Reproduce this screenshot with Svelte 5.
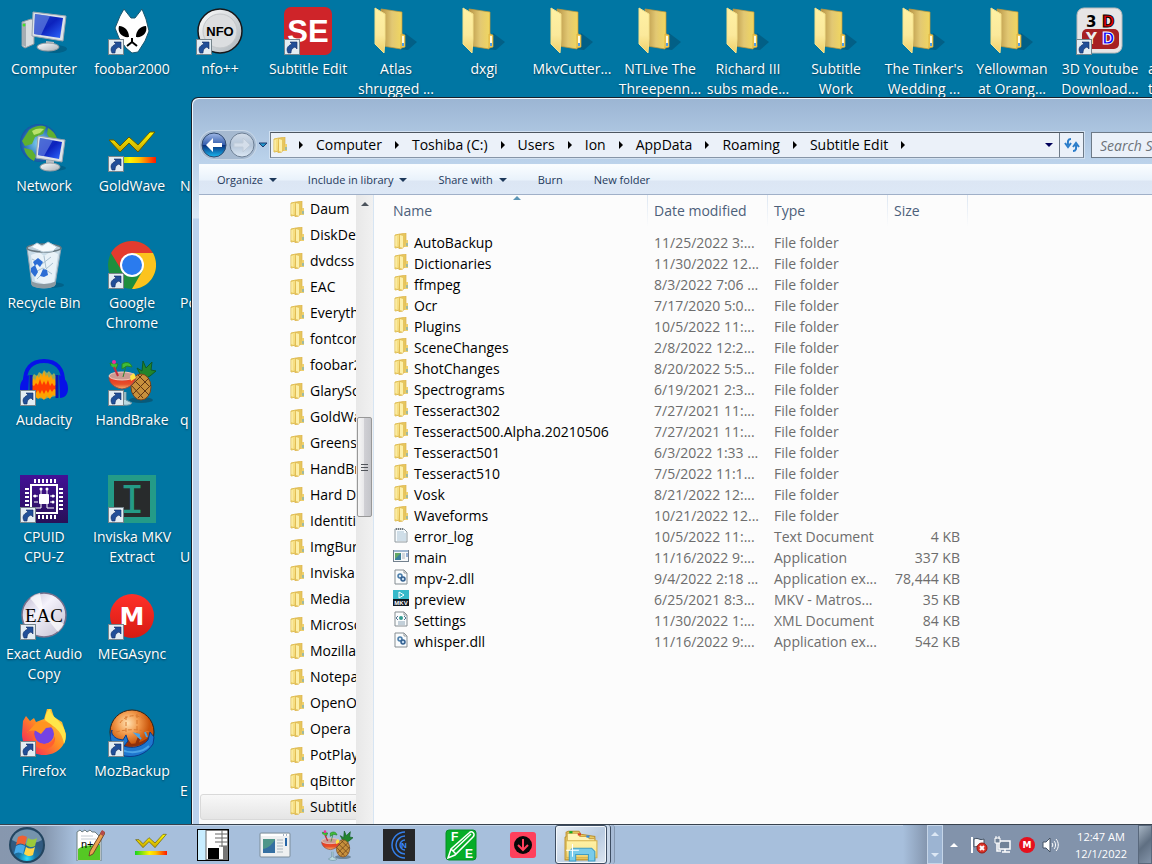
<script lang="ts">
    type Shortcut = { icon: string, label: string[], link?: boolean, cut?: boolean, col: number, row: number };

    const shortcuts: Shortcut[] = [
        { icon: "computer", label: ["Computer"], col: 1, row: 1 },
        { icon: "network", label: ["Network"], col: 1, row: 2 },
        { icon: "bin", label: ["Recycle Bin"], col: 1, row: 3 },
        { icon: "audacity", label: ["Audacity"], link: true, col: 1, row: 4 },
        { icon: "cpuz", label: ["CPUID", "CPU-Z"], link: true, col: 1, row: 5 },
        { icon: "eac", label: ["Exact Audio", "Copy"], link: true, col: 1, row: 6 },
        { icon: "firefox", label: ["Firefox"], link: true, col: 1, row: 7 },
        { icon: "foobar", label: ["foobar2000"], link: true, col: 2, row: 1 },
        { icon: "goldwave", label: ["GoldWave"], link: true, col: 2, row: 2 },
        { icon: "chrome", label: ["Google", "Chrome"], link: true, col: 2, row: 3 },
        { icon: "handbrake", label: ["HandBrake"], link: true, col: 2, row: 4 },
        { icon: "inviska", label: ["Inviska MKV", "Extract"], link: true, col: 2, row: 5 },
        { icon: "mega", label: ["MEGAsync"], link: true, col: 2, row: 6 },
        { icon: "mozbackup", label: ["MozBackup"], link: true, col: 2, row: 7 },
        { icon: "nfo", label: ["nfo++"], link: true, col: 3, row: 1 },
        { icon: "", label: ["N"], cut: true, col: 3, row: 2 },
        { icon: "", label: ["Po"], cut: true, col: 3, row: 3 },
        { icon: "", label: ["q"], cut: true, col: 3, row: 4 },
        { icon: "", label: ["", "U"], cut: true, col: 3, row: 5 },
        { icon: "", label: ["", "E"], cut: true, col: 3, row: 7 },
        { icon: "subtitle", label: ["Subtitle Edit"], link: true, col: 4, row: 1 },
        { icon: "folder", label: ["Atlas", "shrugged ..."], col: 5, row: 1 },
        { icon: "folder", label: ["dxgi"], col: 6, row: 1 },
        { icon: "folder", label: ["MkvCutter..."], col: 7, row: 1 },
        { icon: "folder", label: ["NTLive The", "Threepenn..."], col: 8, row: 1 },
        { icon: "folder", label: ["Richard III", "subs made..."], col: 9, row: 1 },
        { icon: "folder", label: ["Subtitle", "Work"], col: 10, row: 1 },
        { icon: "folder", label: ["The Tinker's", "Wedding ..."], col: 11, row: 1 },
        { icon: "folder", label: ["Yellowman", "at Orang..."], col: 12, row: 1 },
        { icon: "youtube", label: ["3D Youtube", "Download..."], link: true, col: 13, row: 1 },
        { icon: "", label: ["a", "t"], cut: true, col: 14, row: 1 },
    ];

    const path = ["Computer", "Toshiba (C:)", "Users", "Ion", "AppData", "Roaming", "Subtitle Edit"];

    const tree = [
        "Daum", "DiskDefrag", "dvdcss", "EAC", "Everything", "fontconfig", "foobar2000", "GlarySoft",
        "GoldWave", "Greenshot", "HandBrake", "Hard Disk", "Identities", "ImgBurn", "Inviska", "Media",
        "Microsoft", "Mozilla", "Notepad++", "OpenOffice", "Opera", "PotPlayer", "qBittorrent", "Subtitle Edit",
    ];

    const files = [
        ["folder", "AutoBackup", "11/25/2022 3:...", "File folder", ""],
        ["folder", "Dictionaries", "11/30/2022 12...", "File folder", ""],
        ["folder", "ffmpeg", "8/3/2022 7:06 ...", "File folder", ""],
        ["folder", "Ocr", "7/17/2020 5:0...", "File folder", ""],
        ["folder", "Plugins", "10/5/2022 11:...", "File folder", ""],
        ["folder", "SceneChanges", "2/8/2022 12:2...", "File folder", ""],
        ["folder", "ShotChanges", "8/20/2022 5:5...", "File folder", ""],
        ["folder", "Spectrograms", "6/19/2021 2:3...", "File folder", ""],
        ["folder", "Tesseract302", "7/27/2021 11:...", "File folder", ""],
        ["folder", "Tesseract500.Alpha.20210506", "7/27/2021 11:...", "File folder", ""],
        ["folder", "Tesseract501", "6/3/2022 1:33 ...", "File folder", ""],
        ["folder", "Tesseract510", "7/5/2022 11:1...", "File folder", ""],
        ["folder", "Vosk", "8/21/2022 12:...", "File folder", ""],
        ["folder", "Waveforms", "10/21/2022 12...", "File folder", ""],
        ["text", "error_log", "10/5/2022 11:...", "Text Document", "4 KB"],
        ["app", "main", "11/16/2022 9:...", "Application", "337 KB"],
        ["dll", "mpv-2.dll", "9/4/2022 2:18 ...", "Application ex...", "78,444 KB"],
        ["mkv", "preview", "6/25/2021 8:3...", "MKV - Matros...", "35 KB"],
        ["xml", "Settings", "11/30/2022 1:...", "XML Document", "84 KB"],
        ["dll", "whisper.dll", "11/16/2022 9:...", "Application ex...", "542 KB"],
    ];

    const pinned = [
        ["notepad", "Notepad++"],
        ["goldwave", "GoldWave"],
        ["piano", "Piano"],
        ["appwin", "Application"],
        ["handbrake", "HandBrake"],
        ["sonar", "N"],
        ["filmedit", "FE"],
        ["download", "Download"],
    ];

    let selected = $state("Subtitle Edit");
</script>

{#snippet art(name: string, size: number)}
    <svg class="art" width={size} height={size} viewBox={["notepad", "piano", "appwin", "sonar", "filmedit", "download", "explorer"].includes(name) ? "0 0 32 32" : "0 0 48 48"} aria-hidden="true">
        {#if name === "computer"}
            <ellipse cx="35" cy="42" rx="12" ry="4" fill="#024e70" opacity=".5" />
            <path d="M2 15l9-3 3 1v24l-9 4-3-2z" fill="#d9dde0" stroke="#8f989e" />
            <path d="M2 15l4 1v24l-4-2z" fill="#a6adb3" />
            <circle cx="4" cy="18" r="1.500" fill="#43e02c" />
            <path d="M26 34l8 1v6h-8z" fill="#b9bfc5" />
            <ellipse cx="28" cy="40" rx="11" ry="4" fill="url(#silver)" stroke="#969da3" />
            <path d="M13 5l33 4-3 25-31-5z" fill="#dde3e8" stroke="#9aa5b0" />
            <path d="M15 7l28 4-3 20-26-4z" fill="url(#screen)" />
            <path d="M15 7l15 2-9 19-7-1z" fill="#7895e8" opacity=".55" />
        {:else if name === "network"}
            <circle cx="19" cy="19" r="19" fill="url(#globe)" />
            <path d="M9 6c7-5 13-5 17-3l-3 7-8 3-3 7-7 2-3-5zM28 4c7 4 9 9 10 14l-8-3-3-5zM4 24l8 2 4 6-2 5c-6-3-9-8-10-13z" fill="#5fb02f" />
            <path d="M12 7c4-3 9-3 12-2l-4 4-6 2z" fill="#b9e26b" />
            <ellipse cx="34" cy="44" rx="12" ry="3" fill="#024e70" opacity=".5" />
            <path d="M26 34l8 1v8h-8z" fill="#b9bfc5" />
            <ellipse cx="30" cy="43" rx="10" ry="4" fill="url(#silver)" stroke="#969da3" />
            <path d="M18 12l27 4-3 22-26-4z" fill="#dde3e8" stroke="#9aa5b0" />
            <path d="M20 14l22 4-3 17-21-4z" fill="url(#screen)" />
            <path d="M20 14l13 2-9 16-6-1z" fill="#7895e8" opacity=".55" />
        {:else if name === "bin"}
            <ellipse cx="30" cy="44" rx="14" ry="3" fill="#024e70" opacity=".5" />
            <path d="M7 7l5 37c6 4 18 4 23 0l6-37z" fill="#c9dce8" stroke="#8fa3b0" />
            <path d="M11 14l8-3 5 4 8-5 6 3-4 28-10 2-9-3z" fill="#e9f2f8" />
            <path d="M12 18l10 5 9-7M15 31l8-4 9 6M17 38l6-6M33 22l-7 6M24 15l2 12" stroke="#a9c0d0" fill="none" />
            <ellipse cx="24" cy="7" rx="17" ry="4" fill="#b8ccd8" stroke="#68777f" stroke-width="1.500" />
            <path d="M11 6l6-4 5 3 6-4 9 5-4 4-10 1z" fill="#f7fbfd" stroke="#bed0dc" />
            <path d="M13 21l5-4 5 4-3 5-3-3-2 2zM11 27l4-3 3 7-3 5-4-5zM20 35l3-7 4 1 1 5-4 2z" fill="#2c6dd5" />
            <path d="M11 40c7 4 19 4 25 0l-1 5c-6 3-17 3-23 0z" fill="#8c9aa2" />
        {:else if name === "audacity"}
            <path d="M11 38V21l3-5 3 2 2-4 3 2 2-4 3 3 2-2 3 4 2-2 3 5v18l-6 1-6 2-8-1z" fill="#b9b84c" opacity=".8" />
            <path d="M12 37V23l2-3 1 3 2-6 2 3 2-5 1 4 2-6 2 6 1-3 2 4 2-3 2 5 1-2 2 4v14l-3-1-3 4-3-3-3 4-3-3-3 2-2-2z" fill="#ffa200" />
            <path d="M12 27l2 1 2-3 2 2 2-6 2 6 2-4 2 4 2-5 2 6 2-3 2 3 3-2v6l-3-1-2 3-2-3-2 4-2-3-2 4-2-4-2 4-2-4-2 3-2-3-2 1z" fill="#ff3c00" />
            <path d="M5 26C4 10 12 3 24 3s20 7 19 23" fill="none" stroke="#0712e8" stroke-width="4" />
            <path d="M9 17C2 20 0 25 0 31c0 5 3 9 8 9zM39 17c7 3 9 8 9 14 0 5-3 9-8 9z" fill="#0712e8" />
            <path d="M11 17v23M37 17v23" stroke="#0a18b4" stroke-width="3" />
        {:else if name === "cpuz"}
            <rect width="48" height="48" fill="url(#violet)" />
            <path d="M14 6h22M14 42h22" stroke="#fff" stroke-width="4" stroke-dasharray="2 2" />
            <path d="M7 13v24M41 13v24" stroke="#fff" stroke-width="4" stroke-dasharray="2 2" />
            <rect x="11" y="10" width="26" height="28" fill="none" stroke="#fff" stroke-width="2" />
            <rect x="19" y="19" width="10" height="10" rx="1" fill="#fff" />
            <path d="M21 20v-6M27 20v-6M18 21h-5M18 27h-4M30 21h5M30 27h4M21 29v4h-6M27 29v4h7" stroke="#fff" fill="none" />
            <g fill="#fff"><circle cx="21" cy="14" r="1.500" /><circle cx="27" cy="14" r="1.500" /><circle cx="15" cy="21" r="1.500" /><circle cx="33" cy="21" r="1.500" /><circle cx="33" cy="27" r="1.500" /></g>
        {:else if name === "eac"}
            <circle cx="24" cy="23" r="22" fill="url(#disc)" stroke="#77708c" stroke-width="1.500" />
            <path d="M24 23L10 6a22 22 0 0110-5zM24 23l14 17a22 22 0 006-8z" fill="#fff" opacity=".7" />
            <text x="24" y="30" text-anchor="middle" class="serif" font-size="19">EAC</text>
        {:else if name === "firefox"}
            <path d="M3 12l3-5 4 5 4-3 2 4 8-3 3-10 4-1 3 9 8 5 4 12c0 12-9 21-22 21C11 46 2 37 2 25z" fill="url(#flame)" />
            <path d="M25 11c0-6 3-10 5-11 0 6 7 9 11 15 5 6 6 14 3 20-1-8-5-14-11-18z" fill="#ffe64a" />
            <circle cx="24" cy="25" r="10" fill="#7543e3" />
            <path d="M15 15c7-4 15-2 18 3l-7 1-5 6-5-3c-3-1-9 0-9 2z" fill="#ff9420" />
            <path d="M14 22c0 9 5 13 11 13 5 0 9-4 10-8 1 8-4 14-13 13-7-1-11-8-8-18z" fill="#ff602e" />
        {:else if name === "foobar"}
            <path d="M16 2l7 9h4l7-9 4 10 3 12-4 10-7 11-6 1-6-5-7-10-4-10 5-12z" fill="#fff" stroke="#1b5870" />
            <path d="M11 19c6 0 10 5 10 11-6 1-12-4-10-11zM38 19c-6 0-10 5-10 11 6 1 12-4 10-11z" fill="#000" />
            <path d="M19 39l5-4 5 4M24 35v-4" fill="none" stroke="#000" stroke-width="2" />
        {:else if name === "goldwave"}
            <path d="M1 16h5l6 6 9-9 9 8L42 8h5L30 28l-9-9-9 9z" fill="url(#gold)" stroke="#665b00" />
            <rect y="33" width="48" height="6" fill="url(#spectrum)" />
        {:else if name === "chrome"}
            <circle cx="24" cy="24" r="24" fill="#1e8e3e" />
            <path d="M3 12C12-4 36-4 45 12H24L14 30z" fill="#e33b2e" />
            <path d="M45 12c9 17-3 36-21 36l11-19-11-17z" fill="#fcc31e" />
            <circle cx="24" cy="24" r="12" fill="#fff" />
            <circle cx="24" cy="24" r="10" fill="#2a7bee" />
        {:else if name === "handbrake"}
            <ellipse cx="33" cy="42" rx="12" ry="3" fill="#14333d" opacity=".4" />
            <path d="M33 18l-4-8 5 3 1-10 3 7 6-6-1 8 5 1-6 5-4 2z" fill="#21852d" stroke="#105a26" />
            <ellipse cx="33" cy="29" rx="10" ry="13" fill="#c7903c" stroke="#79451b" />
            <path d="M25 21l16 16M23 27l12 13M30 17l12 12M41 20L25 36M43 27L30 40M34 17L23 28" stroke="#5d3514" />
            <path d="M16 34v8l-5 3c3 3 11 3 13 0l-6-3v-8" fill="#bad9e0" stroke="#6f94a2" />
            <path d="M1 19c0 6 5 11 13 12 8-1 13-6 14-12-7 4-20 4-27 0z" fill="url(#drink)" stroke="#87504b" />
            <ellipse cx="14" cy="18" rx="13" ry="4" fill="#ca9b92" stroke="#fdc9b8" />
            <path d="M3 8l-1-3 8 1-2 5M14 6c5-3 9-1 10 3l-5-1-5 3zM18 8l-3 11" fill="#41be36" stroke="#24832b" />
            <circle cx="6" cy="4" r="2" fill="#f02ca0" /><path d="M6 9l4 9" stroke="#c22d3c" stroke-width="2" />
            <path d="M22 18l4-3 2 5-5 3z" fill="#ffe344" />
        {:else if name === "inviska"}
            <rect width="48" height="48" fill="#249b87" />
            <rect x="6" y="6" width="36" height="36" fill="#282b2c" />
            <text x="24" y="38" text-anchor="middle" class="mono" font-size="42" fill="#249b87">I</text>
        {:else if name === "mega"}
            <circle cx="24" cy="24" r="22" fill="url(#red)" />
            <text x="24" y="33" text-anchor="middle" class="wide" font-size="25" fill="#fff">M</text>
        {:else if name === "mozbackup"}
            <circle cx="24" cy="23" r="22" fill="url(#orange)" stroke="#342314" />
            <path d="M12 14c5-8 17-10 25-3M8 23c11-3 22-3 33 0M18 7v19M29 5v21" fill="none" stroke="#d8792f" stroke-dasharray="4 2" />
            <path d="M9 33c9 5 23 5 34-5M18 30l5 7M31 29l-3 8" stroke="#8f310d" fill="none" stroke-width="3" />
            <path d="M4 21c-4 8 0 18 9 25 12 4 25 0 32-11l1-7-4-5-2 8c-6 7-16 9-24 6l4-5-2-6-3 5-5-1c-5-2-7-6-6-9z" fill="#1e77cf" stroke="#0a3c8c" />
            <path d="M12 40c9 5 22 4 29-3M39 28l-2-5M33 30l-5-5 4 1" fill="none" stroke="#4aa3e6" stroke-width="2" />
        {:else if name === "nfo"}
            <circle cx="24" cy="24" r="22" fill="url(#silver)" stroke="#171719" stroke-width="1.500" />
            <circle cx="24" cy="24" r="17" fill="#dcdee0" stroke="#c4c7ca" />
            <text x="24" y="29" text-anchor="middle" class="sans heavy" font-size="13">NFO</text>
        {:else if name === "subtitle"}
            <rect x="0" y="0" width="48" height="48" rx="7" fill="#cf2429" />
            <text x="24" y="35" text-anchor="middle" class="sans heavy" font-size="31" fill="#fff">SE</text>
        {:else if name === "folder"}
            <path d="M25 42l8-16 12 9-9 8z" fill="#063f5b" opacity=".4" />
            <path d="M9 2l21 3v21l1 4-2 12-18-3z" fill="url(#pane)" stroke="#c59a38" stroke-width=".7" />
            <path d="M3 1l10 6v25l-1 14-9-9z" fill="url(#flap)" stroke="#f4e28c" />
            <path d="M29 27l4 1v12l-4 1z" fill="#f0cb56" stroke="#d8a93a" stroke-width=".7" />
            <path d="M31 29v8" stroke="#fffbe0" stroke-width="2" /><path d="M31 36v3" stroke="#4f9ee9" stroke-width="2" />
        {:else if name === "youtube"}
            <rect x="1" y="1" width="45" height="45" rx="7" fill="#e7e5e5" stroke="#bababa" />
            <rect x="6" y="22" width="37" height="20" rx="5" fill="#a72022" />
            <text x="10" y="20" class="wide" font-size="15">3</text><text x="26" y="20" class="wide" font-size="15" fill="#e60000" stroke="#000">D</text>
            <text x="10" y="37" class="wide" font-size="15" fill="#eee">Y</text><text x="26" y="37" class="wide" font-size="15" fill="#0001ff" stroke="#fff">D</text>
        {:else if name === "notepad"}
            <path d="M4 3l3-2 2 2 3-2 2 2 3-2 2 2h3l6 6v23H4z" fill="#fff" stroke="#6f8082" />
            <path d="M5 20c6-5 14-3 22-4v15H5z" fill="#55c824" />
            <path d="M8 7h12M8 10h15" stroke="#c4ccd2" />
            <text x="8" y="19" class="sans" font-size="11">n++</text>
            <path d="M29 2l3 2-12 21-4 2 1-5z" fill="#eba34f" stroke="#6f4927" /><path d="M29 1l3 2-2 4-3-2z" fill="#b54a4a" />
        {:else if name === "piano"}
            <rect x="1" y="1" width="30" height="30" fill="#fff" stroke="#000" />
            <path d="M1 1h8v30H1z" fill="#c8edff" /><path d="M9 1v30M18 5h13M18 9h13M18 13h13M22 17h9M25 1v17" stroke="#666" />
            <rect x="26" y="17" width="5" height="14" fill="#777" /><rect x="11" y="19" width="11" height="11" fill="#000" />
            <rect x=".5" y=".5" width="31" height="31" fill="none" stroke="#000" />
        {:else if name === "appwin"}
            <rect x="1" y="4" width="30" height="24" rx="1" fill="#eef0f1" stroke="#7d8e9c" />
            <path d="M2 6h28" stroke="#fff" stroke-width="2" /><rect x="4" y="10" width="12" height="14" fill="#4f9689" /><path d="M4 20c6-1 9-5 12-9v13H4z" fill="#356fa2" />
            <path d="M18 11h6M18 14h6M18 17h6M18 20h6M18 23h6" stroke="#aab6bd" /><path d="M27 9v8" stroke="#2766a8" stroke-width="2" />
            <path d="M24 6h1M27 6h1" stroke="#4b6385" />
        {:else if name === "sonar"}
            <rect width="32" height="32" fill="#252628" />
            <path d="M22 3a13 13 0 000 26M22 7a9 9 0 000 18M22 11a5 5 0 000 10" fill="none" stroke="#357fe8" stroke-width="1.500" />
            <text x="18" y="19" class="sans heavy" font-size="8" fill="#3d8dff">N</text>
        {:else if name === "filmedit"}
            <rect x="1" y="1" width="30" height="30" rx="3" fill="#06ad27" stroke="#078d27" />
            <text x="6" y="12" class="sans heavy" font-size="12" fill="#fff">F</text><text x="20" y="29" class="sans heavy" font-size="12" fill="#fff">E</text>
            <path d="M3 29l3-9L24 4c3-3 7 1 4 4L10 26zM8 22L26 5M6 20l5 5" fill="none" stroke="#fff" stroke-width="1.500" />
        {:else if name === "download"}
            <rect x="3" y="3" width="26" height="26" rx="3" fill="#ff405c" />
            <circle cx="16" cy="16" r="9" fill="#080808" /><path d="M16 10v11M11 16l5 5 5-5" fill="none" stroke="#ff405c" stroke-width="2" />
        {:else if name === "explorer"}
            <path d="M2 8V4l2-1h10l2 3 13 2v22H1V9z" fill="#e8cb65" stroke="#bd912f" />
            <path d="M3 9V5h10l2 3h7l2 2h5v4H3z" fill="#fff4b8" stroke="#cda547" />
            <path d="M5 4h3" stroke="#11aa22" stroke-width="2" /><path d="M13 6h3" stroke="#dd3d2a" stroke-width="2" /><path d="M21 8h3" stroke="#2b8bea" stroke-width="2" />
            <path d="M2 12h29v16H2z" fill="url(#flap)" stroke="#d5b04b" />
            <path d="M5 31V22l3-3h18l3 3v9h-6v-6H11v6z" fill="#79cbea" stroke="#3f9dc5" />
            <path d="M8 15v12M2 21h12" stroke="#fff" />
        {/if}
    </svg>
{/snippet}

{#snippet small(name: string)}
    <svg class="small" width="16" height="16" viewBox="0 0 16 16" aria-hidden="true">
        {#if name === "folder"}
            <path d="M2 2l5-1v13l-5 1z" fill="#f6df83" stroke="#dfbe55" />
            <path d="M7 1l6-1v13l-3 1v1l-4 1z" fill="#e6c65e" stroke="#dcb34b" stroke-width=".7" />
            <path d="M7 2l3 1v12l-3-1z" fill="#fcefa9" /><path d="M3 3v10" stroke="#fff6bd" />
            <path d="M13 7h2v7h-3z" fill="#eed06d" /><path d="M14 10v3" stroke="#54a5d2" />
        {:else if name === "text"}
            <path d="M2 2h9l3 3v10H2z" fill="#f7fbfd" stroke="#8f999f" /><path d="M3 2h8" stroke="#70787d" stroke-dasharray="1 1" stroke-width="2" />
            <path d="M4 5h7M4 7h9M4 9h9M4 11h9M4 13h9" stroke="#a8c1d3" />
        {:else if name === "app"}
            <rect x=".5" y="2.500" width="15" height="11" fill="#f6f8f9" stroke="#72808d" /><path d="M1 3h14" stroke="#9db6d0" stroke-width="2" />
            <rect x="2" y="5" width="6" height="7" fill="#3a809d" /><path d="M2 5h6l-6 6z" fill="#61a765" /><path d="M9 6h3M9 8h3M9 10h3" stroke="#abb5bc" /><path d="M14 5v4" stroke="#3067b1" />
        {:else if name === "mkv"}
            <rect width="16" height="10" fill="#36b9ca" /><rect y="9" width="16" height="7" fill="#101922" />
            <path d="M6 2l5 3-5 3z" fill="none" stroke="#fff" /><text x="8" y="15" text-anchor="middle" class="sans heavy" font-size="6" fill="#fff">MKV</text>
        {:else}
            <path d="M2 1h9l3 3v11H2z" fill="#fafcfd" stroke="#858d92" /><path d="M11 1v3h3" fill="none" stroke="#92999d" />
            {#if name === "dll"}
                <circle cx="7" cy="7" r="2" fill="#dbe9f5" stroke="#477ba9" stroke-width="1.500" /><circle cx="10" cy="10" r="2" fill="#bed8ee" stroke="#315f90" stroke-width="1.500" />
            {:else}
                <path d="M5 5L3 7l2 2M11 5l2 2-2 2" fill="none" stroke="#527391" /><circle cx="8" cy="7" r="2" fill="#329b91" /><path d="M5 11h7M5 13h7" stroke="#8aa2b4" />
            {/if}
        {/if}
    </svg>
{/snippet}

<svg class="defs" width="0" height="0" aria-hidden="true">
    <defs>
        <linearGradient id="silver" x2="1" y2="1"><stop stop-color="#fff" /><stop offset="1" stop-color="#a9b1b7" /></linearGradient>
        <linearGradient id="screen" x2="1" y2="1"><stop stop-color="#1942c4" /><stop offset=".5" stop-color="#0c22bd" /><stop offset="1" stop-color="#2f69ff" /></linearGradient>
        <radialGradient id="globe"><stop stop-color="#82d5f5" /><stop offset="1" stop-color="#1554a3" /></radialGradient>
        <linearGradient id="violet" x2="0" y2="1"><stop stop-color="#431196" /><stop offset="1" stop-color="#281057" /></linearGradient>
        <linearGradient id="disc" x2="1" y2="1"><stop stop-color="#b9b4cc" /><stop offset=".4" stop-color="#f4f2fb" /><stop offset="1" stop-color="#c1bed0" /></linearGradient>
        <linearGradient id="flame" x1="1" x2="0" y2="1"><stop stop-color="#ffe13f" /><stop offset=".5" stop-color="#ff8a24" /><stop offset="1" stop-color="#f10b68" /></linearGradient>
        <linearGradient id="gold" x2="0" y2="1"><stop stop-color="#fff900" /><stop offset="1" stop-color="#caa600" /></linearGradient>
        <linearGradient id="spectrum"><stop stop-color="#12d420" /><stop offset=".45" stop-color="#fff500" /><stop offset=".65" stop-color="#ffc300" /><stop offset="1" stop-color="#ff1700" /></linearGradient>
        <linearGradient id="drink" x2="0" y2="1"><stop stop-color="#eb3022" /><stop offset=".6" stop-color="#e65029" /><stop offset="1" stop-color="#f6b46e" /></linearGradient>
        <linearGradient id="red" x2="0" y2="1"><stop stop-color="#ff3029" /><stop offset="1" stop-color="#d61b12" /></linearGradient>
        <radialGradient id="orange" cx=".4" cy=".3"><stop stop-color="#ffe2b3" /><stop offset=".5" stop-color="#f29a4c" /><stop offset="1" stop-color="#c9540a" /></radialGradient>
        <linearGradient id="pane"><stop stop-color="#b69345" /><stop offset=".5" stop-color="#e2c873" /><stop offset="1" stop-color="#f2d85e" /></linearGradient>
        <linearGradient id="flap" x2="0" y2="1"><stop stop-color="#fff1a4" /><stop offset=".6" stop-color="#fbe99b" /><stop offset="1" stop-color="#eecf6a" /></linearGradient>
        <linearGradient id="blue" x2="0" y2="1"><stop stop-color="#a1b9e7" /><stop offset=".48" stop-color="#365fae" /><stop offset=".5" stop-color="#082d7c" /><stop offset="1" stop-color="#19b8ef" /></linearGradient>
        <linearGradient id="glass" x2="0" y2="1"><stop stop-color="#d4deea" /><stop offset=".5" stop-color="#b3c4d8" /><stop offset="1" stop-color="#dce8f4" /></linearGradient>
        <radialGradient id="orb" cy=".9"><stop stop-color="#2ce0ff" /><stop offset=".5" stop-color="#1777a9" /><stop offset="1" stop-color="#315a80" /></radialGradient>
    </defs>
</svg>

<div class="screen">
    <main class="desktop">
        <div class="shortcuts">
            {#each shortcuts as s}
                <button class="shortcut" class:cut={s.cut} style="grid-column: {s.col}; grid-row: {s.row}">
                    <span class="picture">
                        {@render art(s.icon, 48)}
                        {#if s.link}
                            <svg class="arrow" width="16" height="16" viewBox="0 0 16 16" aria-hidden="true">
                                <rect x=".5" y=".5" width="15" height="15" fill="#e4edf3" stroke="#77858c" />
                                <path d="M4 14c-2-4-1-7 4-9L6 3h7v7l-2-2c-3 1-4 3-4 6z" fill="#214f98" stroke="#102c64" stroke-width=".6" />
                            </svg>
                        {/if}
                    </span>
                    {#each s.label as line}
                        <span class="line">{line}</span>
                    {/each}
                </button>
            {/each}
        </div>

        <section class="window" aria-label="Subtitle Edit">
            <header class="top">
                <div class="travel">
                    <button aria-label="Back">
                        <svg width="28" height="28" viewBox="0 0 28 28"><circle cx="14" cy="14" r="12" fill="url(#blue)" stroke="#314b70" /><path d="M13 7l-7 7 7 7v-5h9v-4h-9z" fill="#fff" /></svg>
                    </button>
                    <button aria-label="Forward">
                        <svg width="28" height="28" viewBox="0 0 28 28"><circle cx="14" cy="14" r="12" fill="url(#glass)" stroke="#6e8095" /><path d="M15 7l7 7-7 7v-5H6v-4h9z" fill="#d4deea" stroke="#c0ccd9" /></svg>
                    </button>
                </div>
                <button class="recent" aria-label="Recent pages">
                    <svg width="10" height="6" viewBox="0 0 10 6"><path d="M1 1h8L5 5z" fill="#2096cb" stroke="#203d70" /></svg>
                </button>
                <nav class="address" aria-label="Address">
                    {@render small("folder")}
                    <div class="crumbs">
                        {#each path as part}
                            <span class="sep"></span>
                            <a href="#top">{part}</a>
                        {/each}
                        <span class="sep"></span>
                    </div>
                    <button class="history" aria-label="Previous locations"><span class="caret"></span></button>
                    <button class="refresh" aria-label="Refresh">
                        <svg width="16" height="14" viewBox="0 0 16 14"><path d="M7 1C3 1 4 5 4 7M1 5l3 4 3-4M9 13c4 0 3-4 3-6M9 9l3-4 3 4" fill="none" stroke="#2b7dca" stroke-width="2" /></svg>
                    </button>
                </nav>
                <input class="search" type="search" placeholder="Search Subtitle Edit" aria-label="Search Subtitle Edit" />
            </header>

            <div class="body">
                <div class="toolbar">
                    <button>Organize <span class="caret"></span></button>
                    <button>Include in library <span class="caret"></span></button>
                    <button>Share with <span class="caret"></span></button>
                    <button>Burn</button>
                    <button>New folder</button>
                </div>

                <div class="panes">
                    <nav class="tree" aria-label="Folders">
                        {#each tree as name}
                            <button class:selected={selected === name} onclick={() => selected = name}>
                                {@render small("folder")}
                                <span>{name}</span>
                            </button>
                        {/each}
                    </nav>
                    <div class="scrollbar">
                        <span class="up"></span>
                        <span class="thumb"><i></i><i></i><i></i></span>
                    </div>
                    <div class="list">
                        <table>
                            <thead>
                                <tr>
                                    <th class="name">Name<span class="sorted"></span></th>
                                    <th class="date">Date modified</th>
                                    <th class="type">Type</th>
                                    <th class="size">Size</th>
                                </tr>
                            </thead>
                            <tbody>
                                {#each files as [icon, name, date, type, size]}
                                    <tr>
                                        <td><span class="file">{@render small(icon)}{name}</span></td>
                                        <td>{date}</td>
                                        <td>{type}</td>
                                        <td>{size}</td>
                                    </tr>
                                {/each}
                            </tbody>
                        </table>
                    </div>
                </div>
            </div>
        </section>
    </main>

    <footer class="taskbar">
        <button class="start" aria-label="Start">
            <svg width="38" height="38" viewBox="0 0 38 38">
                <circle cx="19" cy="19" r="17" fill="url(#orb)" stroke="#234560" stroke-width="2" />
                <path d="M4 14C8 0 30 0 34 14c-9 5-21 5-30 0z" fill="#b9cdda" opacity=".5" />
                <path d="M10 11c3-2 6-2 9 0l-2 8c-3-2-6-2-9 0z" fill="#ee6133" />
                <path d="M20 12c3 2 6 2 9 0l-2 8c-3 2-6 1-9-1z" fill="#9bca3b" />
                <path d="M8 20c3-2 6-2 9 0l-2 8c-3-2-6-2-9 0z" fill="#47aaea" />
                <path d="M18 21c3 2 6 2 9 0l-2 8c-3 2-6 1-9-1z" fill="#ffd548" />
            </svg>
        </button>
        {#each pinned as [icon, title]}
            <button class="pin" aria-label={title}>{@render art(icon, 32)}</button>
        {/each}
        <button class="active" aria-label="Windows Explorer">{@render art("explorer", 34)}</button>
        <span class="stack"></span>
        <span class="stack faint"></span>
        <div class="tray">
            <div class="scroller"><span></span><span></span></div>
            <button class="more" aria-label="Show hidden icons"></button>
            <button class="status" aria-label="Action Center">
                <svg width="18" height="18" viewBox="0 0 18 18"><path d="M2 1v16" stroke="#fff" stroke-width="2" /><path d="M4 3c5-2 5 2 10 0v8c-5 2-5-2-10 0z" fill="#f7f9fa" stroke="#465464" /><circle cx="12" cy="12" r="5" fill="#dc3429" stroke="#971810" /><path d="M10 10l4 4M14 10l-4 4" stroke="#fff" stroke-width="2" /></svg>
            </button>
            <button class="status" aria-label="Network">
                <svg width="18" height="18" viewBox="0 0 18 18"><rect x="5" y="5" width="11" height="8" fill="#718297" stroke="#fff" stroke-width="1.500" /><path d="M8 16h8M11 13v3M3 7v8h4" stroke="#fff" stroke-width="1.500" fill="none" /><path d="M1 2h5v5H1zM2 0v3M5 0v3" fill="#718297" stroke="#fff" /></svg>
            </button>
            <button class="status" aria-label="MEGAsync">
                <svg width="18" height="18" viewBox="0 0 18 18"><circle cx="9" cy="9" r="8" fill="#e6101d" /><text x="9" y="12" text-anchor="middle" class="wide" font-size="9" fill="#fff">M</text></svg>
            </button>
            <button class="status" aria-label="Volume">
                <svg width="18" height="18" viewBox="0 0 18 18"><path d="M1 6h3l4-4v14l-4-4H1z" fill="#fff" stroke="#445365" /><path d="M10 7c1 1 1 3 0 4M12 5c2 2 2 6 0 8M14 3c3 3 3 9 0 12" stroke="#fff" fill="none" /></svg>
            </button>
            <div class="clock"><time>12:47 AM</time><time>12/1/2022</time></div>
            <button class="peek" aria-label="Show desktop"></button>
        </div>
    </footer>
</div>

<style>
    :global(body) {
        overflow: hidden;
    }

    .screen {
        display: flex;
        flex-direction: column;
        height: 100vh;
        font-family: "Open Sans", "Noto Sans", sans-serif;
        font-size: 14px;
        line-height: 20px;
        color: #000;
    }

    .defs {
        position: absolute;
    }

    button {
        appearance: none;
        margin: 0;
        padding: 0;
        border: 0;
        background: none;
        color: inherit;
        font: inherit;
        white-space: nowrap;
    }

    svg {
        flex: none;
        display: block;
    }

    .sans { font-family: "Liberation Sans", sans-serif; }
    .serif { font-family: "Liberation Serif", serif; }
    .mono { font-family: "Liberation Mono", monospace; }
    .wide { font-family: "DejaVu Sans", sans-serif; font-weight: 700; }
    .heavy { font-weight: 700; }

    .art text {
        text-shadow: none;
    }

    /* DESKTOP */
    .desktop {
        position: relative;
        flex: 1;
        min-height: 0;
        overflow: hidden;
        background: #0076a3;
    }

    .shortcuts {
        display: grid;
        grid-template-columns: repeat(14, 88px);
        grid-auto-rows: 117px;
    }

    .shortcut {
        display: flex;
        flex-direction: column;
        align-items: center;
        padding-top: 7px;
        color: #fff;
        text-shadow: 0 1px 2px #003c55;
    }

    .picture {
        position: relative;
        width: 48px;
        height: 48px;
        margin-bottom: 4px;
    }

    .arrow {
        position: absolute;
        left: 0;
        bottom: 0;
    }

    .line {
        min-height: 20px;
    }

    .cut {
        align-items: flex-start;
        padding-left: 4px;
    }

    /* WINDOW */
    .window {
        position: absolute;
        top: 97px;
        right: -140px;
        bottom: 0;
        left: 191px;
        display: flex;
        flex-direction: column;
        box-sizing: border-box;
        padding: 0 7px;
        border: 1px solid #17202b;
        border-bottom: 0;
        border-radius: 7px 7px 0 0;
        background: linear-gradient(#9bb5d3, #b9d1ea 60px, #d9e7f5 120px, #bad1ec 121px);
        box-shadow: inset 1px 1px #eff6fc;
    }

    .top {
        display: flex;
        align-items: center;
        height: 26px;
        padding: 34px 0 6px 1px;
    }

    .travel {
        display: flex;
        border-radius: 14px;
        background: #a5b9d0;
        box-shadow: 0 0 0 1px #c9d8e8;
    }

    .recent {
        width: 14px;
        padding-left: 2px;
    }

    .address {
        display: flex;
        flex: 1;
        align-items: center;
        height: 24px;
        padding-left: 1px;
        border: 1px solid #6d7a88;
        border-color: #4d5660 #6d7a88 #8796a8;
        background: #ebf1f9;
        box-shadow: 0 0 0 1px #d2e1f1;
    }

    .crumbs {
        display: flex;
        align-items: center;
        margin-left: -2px;
    }

    .crumbs a {
        color: #000;
        text-decoration: none;
    }

    .sep {
        display: flex;
        justify-content: center;
        width: 30px;
    }

    .sep::before {
        content: "";
        border: 4px solid transparent;
        border-left-color: #000;
        border-right: 0;
    }

    .history {
        margin-left: auto;
        padding: 0 6px;
    }

    .caret {
        display: inline-block;
        border: 4px solid transparent;
        border-top-color: #1e395b;
        border-bottom: 0;
    }

    .history .caret {
        display: block;
        border-top-color: #00005a;
    }

    .refresh {
        display: flex;
        align-items: center;
        justify-content: center;
        width: 24px;
        height: 24px;
        border-left: 1px solid #6d7a88;
    }

    .search {
        box-sizing: border-box;
        width: 193px;
        height: 26px;
        margin-left: 7px;
        padding: 0 8px;
        border: 1px solid #6d7a88;
        background: #ebf1f9;
        font: italic 14px "Open Sans", sans-serif;
    }

    .search::placeholder {
        color: #6d737a;
    }

    .body {
        display: flex;
        flex: 1;
        flex-direction: column;
        min-height: 0;
        background: #fcfcfc;
    }

    .toolbar {
        display: flex;
        gap: 31px;
        box-sizing: border-box;
        height: 31px;
        padding-left: 18px;
        border-top: 1px solid #f9fcff;
        border-bottom: 1px solid #a0b0c8;
        background: linear-gradient(#fafdff, #e9f2fb 15px, #dce6f4 16px, #dde8f6);
        color: #1e395b;
        font-size: 11px;
    }

    .toolbar .caret {
        margin: 0 0 2px 3px;
    }

    .panes {
        display: flex;
        flex: 1;
        min-height: 0;
    }

    /* FOLDER TREE */
    .tree {
        box-sizing: border-box;
        width: 157px;
        padding-top: 1px;
        overflow: hidden;
    }

    .tree button {
        display: flex;
        align-items: center;
        gap: 5px;
        box-sizing: border-box;
        width: 180px;
        height: 26px;
        padding-left: 88px;
        border: 1px solid transparent;
        border-radius: 3px;
        margin-left: 1px;
    }

    .tree .selected {
        border-color: #d9d9d9;
        background: linear-gradient(#f8f8f8, #e5e5e5);
    }

    .scrollbar {
        display: flex;
        flex-direction: column;
        align-items: center;
        width: 17px;
        border-right: 1px solid #d7e5f3;
        background: linear-gradient(90deg, #e8e8e8, #f1f1f1);
    }

    .up {
        margin: 7px 0 211px;
        border: 4px solid transparent;
        border-bottom-color: #4b535c;
        border-top: 0;
    }

    .thumb {
        display: flex;
        flex-direction: column;
        align-items: center;
        justify-content: center;
        gap: 2px;
        box-sizing: border-box;
        width: 15px;
        height: 100px;
        border: 1px solid #989898;
        border-radius: 2px;
        background: linear-gradient(90deg, #f6f6f6, #e8e8ea 45%, #cfcfd4 50%, #c4c5ca);
    }

    .thumb i {
        width: 7px;
        height: 1px;
        background: #50545a;
    }

    /* FILE LIST */
    .list {
        flex: 1;
        min-width: 0;
    }

    table {
        width: 594px;
        table-layout: fixed;
        border-spacing: 0;
    }

    th {
        box-sizing: border-box;
        height: 32px;
        padding: 0 0 0 6px;
        background: linear-gradient(#dce6f2, #fcfcfc) right / 1px 100% no-repeat;
        color: #4c607a;
        font-weight: 400;
        text-align: left;
    }

    .name { position: relative; width: 274px; padding-left: 19px; }
    .date, .type { width: 120px; }
    .size { width: 80px; }

    .sorted {
        position: absolute;
        top: 1px;
        left: 139px;
        border: 4px solid transparent;
        border-bottom-color: #5c95b5;
        border-top: 0;
    }

    tbody::before {
        content: "";
        display: block;
        height: 5px;
    }

    td {
        height: 21px;
        padding: 0 0 0 6px;
        color: #6d6d6d;
        white-space: nowrap;
    }

    td:first-child {
        padding-left: 19px;
        color: #000;
    }

    td:last-child {
        padding-right: 8px;
        text-align: right;
    }

    .file {
        display: flex;
        align-items: flex-start;
        gap: 5px;
    }

    /* TASKBAR */
    .taskbar {
        display: flex;
        align-items: center;
        box-sizing: border-box;
        height: 40px;
        border-top: 1px solid #38424e;
        background: linear-gradient(90deg, #8797ae, #8698b0 45px, #a7bfdc 75px);
        box-shadow: inset 0 1px #c4d5e9;
    }

    .start {
        box-sizing: border-box;
        width: 58px;
        padding-left: 8px;
    }

    .pin {
        display: flex;
        justify-content: center;
        width: 62px;
    }

    .active {
        display: flex;
        align-items: center;
        justify-content: center;
        box-sizing: border-box;
        width: 52px;
        height: 39px;
        margin-left: 1px;
        border: 1px solid #3d4d62;
        border-radius: 3px;
        background: linear-gradient(135deg, #e9eff6, #b9cbe1 60%, #dce6f1);
        box-shadow: inset 0 0 0 1px #f4f8fc;
    }

    .stack {
        box-sizing: border-box;
        width: 4px;
        height: 39px;
        border-right: 1px solid #3d4d62;
        border-radius: 0 3px 3px 0;
        background: #c8d6e7;
    }

    .stack.faint {
        border-color: #8497b0;
        background: #a7bbd6;
    }

    .tray {
        display: flex;
        align-items: center;
        height: 39px;
        margin-left: auto;
        padding-left: 24px;
        background: linear-gradient(90deg, #a7bfdc, #8293ab 26px);
    }

    .scroller {
        display: flex;
        flex-direction: column;
        align-items: center;
        justify-content: space-between;
        box-sizing: border-box;
        width: 16px;
        height: 39px;
        padding: 6px 0;
        border: 1px solid #c5d5e8;
        background: #9cb4d2;
    }

    .scroller span {
        border: 4px solid transparent;
        border-bottom-color: #dce7f4;
        border-top: 0;
    }

    .scroller span:last-child {
        transform: rotate(180deg);
    }

    .more {
        width: 0;
        margin: 0 12px 0 7px;
        border: 4px solid transparent;
        border-bottom-color: #fff;
        border-top: 0;
    }

    .status {
        margin-right: 6px;
    }

    .clock {
        display: flex;
        flex-direction: column;
        align-items: center;
        width: 70px;
        padding-right: 2px;
        color: #fff;
        font-size: 11px;
        line-height: 17px;
    }

    .peek {
        box-sizing: border-box;
        width: 14px;
        height: 39px;
        border: 1px solid #59687c;
        background: linear-gradient(135deg, #a5b3c2, #5f6f82 50%, #8394a9);
    }
</style>
